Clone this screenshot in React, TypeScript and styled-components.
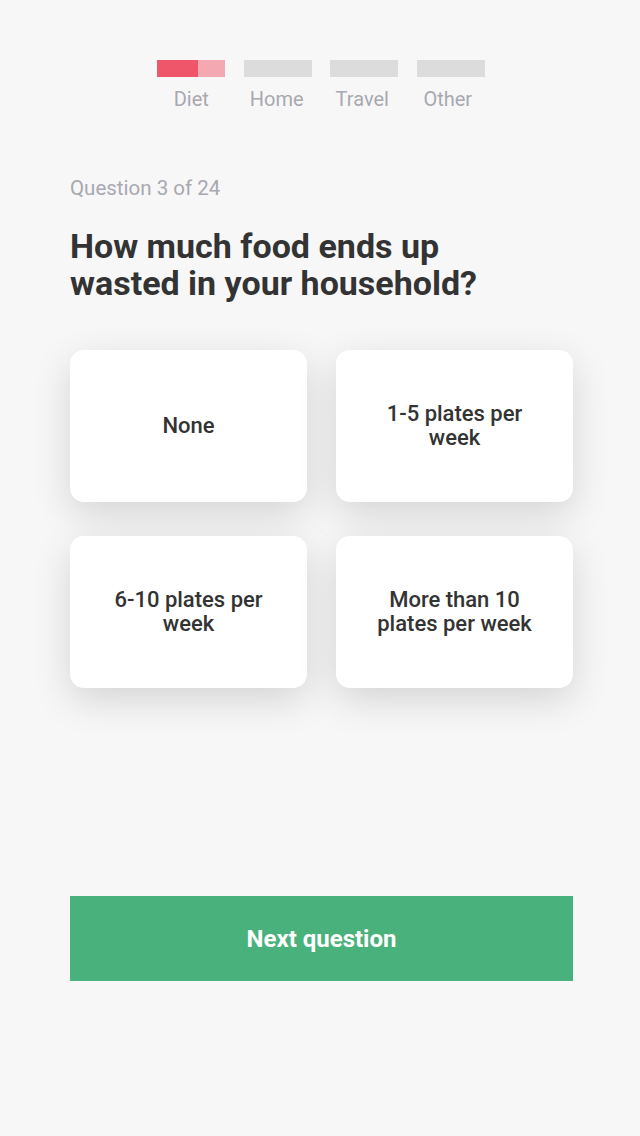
import React from "react";
import styled, { createGlobalStyle } from "styled-components";

const Global = createGlobalStyle`
  html, body { margin: 0; padding: 0; background: #f7f7f7; }
  body { font-family: Roboto, "Liberation Sans", sans-serif; -webkit-font-smoothing: antialiased; }
`;

const Page = styled.div`
  width: 640px;
  min-height: 1136px;
  background: #f7f7f7;
  display: flex;
  flex-direction: column;
  box-sizing: border-box;
  padding-top: 60px;
`;

const Steps = styled.div`
  display: grid;
  grid-template-columns: repeat(4, 68px);
  column-gap: 18.5px;
  justify-content: center;
  margin-left: 2px;
`;

const Step = styled.div`
  display: flex;
  flex-direction: column;
  align-items: center;
`;

const Bar = styled.div<{ $fill: number }>`
  width: 68px;
  height: 17px;
  background: ${(p) =>
    p.$fill > 0
      ? `linear-gradient(to right, #ef5669 0 ${p.$fill}%, #f4a8b1 ${p.$fill}% 100%)`
      : "#dcdcdc"};
`;

const StepLabel = styled.div<{ $shift: number }>`
  margin-top: 10px;
  font-size: 20px;
  line-height: 24px;
  color: #a8a8b0;
  transform: translateX(${(p) => p.$shift}px);
`;

const Content = styled.div`
  width: 503px;
  margin-left: 70px;
  display: flex;
  flex-direction: column;
`;

const Counter = styled.div`
  margin-top: 66px;
  font-size: 20.5px;
  line-height: 22px;
  color: #a8a8b0;
`;

const Heading = styled.h1`
  margin: 29px 0 0;
  font-size: 34px;
  line-height: 37px;
  font-weight: 700;
  color: #333333;
  width: 420px;
`;

const Options = styled.div`
  margin-top: 48px;
  display: grid;
  grid-template-columns: 237px 237px;
  column-gap: 29px;
  row-gap: 34px;
`;

const Option = styled.button`
  height: 152px;
  border: none;
  border-radius: 14px;
  background: #ffffff;
  box-shadow: 0 12px 38px rgba(0, 0, 0, 0.14);
  display: flex;
  align-items: center;
  justify-content: center;
  padding: 0 30px;
  font-family: Roboto, "Liberation Sans", sans-serif;
  font-size: 22px;
  line-height: 24.5px;
  font-weight: 500;
  color: #333333;
  text-align: center;
  cursor: pointer;
`;

const NextButton = styled.button`
  margin-top: 208px;
  height: 85px;
  border: none;
  background: #49b17b;
  color: #ffffff;
  font-family: Roboto, "Liberation Sans", sans-serif;
  font-size: 24px;
  font-weight: 700;
  cursor: pointer;
`;

const steps = [
  { label: "Diet", fill: 60, shift: 0 },
  { label: "Home", fill: 0, shift: -1 },
  { label: "Travel", fill: 0, shift: -2 },
  { label: "Other", fill: 0, shift: -3 },
];

const options = ["None", "1-5 plates per week", "6-10 plates per week", "More than 10 plates per week"];

export default function App() {
  return (
    <>
      <Global />
      <Page>
        <Steps>
          {steps.map((s) => (
            <Step key={s.label}>
              <Bar $fill={s.fill} />
              <StepLabel $shift={s.shift}>{s.label}</StepLabel>
            </Step>
          ))}
        </Steps>
        <Content>
          <Counter>Question 3 of 24</Counter>
          <Heading>How much food ends up wasted in your household?</Heading>
          <Options>
            {options.map((o) => (
              <Option key={o}>{o}</Option>
            ))}
          </Options>
          <NextButton>Next question</NextButton>
        </Content>
      </Page>
    </>
  );
}
